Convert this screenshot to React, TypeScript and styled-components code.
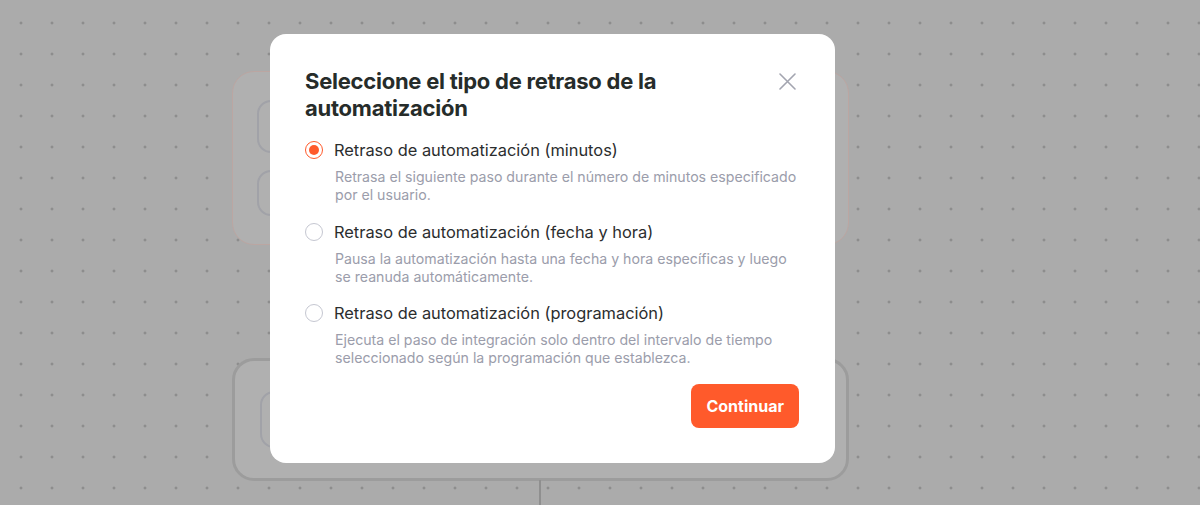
import React, { useState } from "react";
import styled, { createGlobalStyle } from "styled-components";

const Global = createGlobalStyle`
  html, body { margin: 0; padding: 0; }
  body { font-family: Inter, "Noto Sans", sans-serif; background: #ababab; }
  * { box-sizing: border-box; }
`;

const Canvas = styled.div`
  position: relative;
  width: 1200px;
  height: 505px;
  overflow: hidden;
  background-color: #ababab;
  background-image: radial-gradient(circle, #7a7a7a 0.9px, transparent 1.3px);
  background-size: 31px 31px;
  background-position: 5.5px 7.5px;
`;

const NodeCard = styled.div<{ $top: number; $height: number; $tone: "accent" | "plain" }>`
  position: absolute;
  left: 232px;
  top: ${(p) => p.$top}px;
  width: 617px;
  height: ${(p) => p.$height}px;
  border-radius: 22px;
  background: #b0b0b0;
  border: ${(p) => (p.$tone === "accent" ? "1.5px solid #bba6a2" : "3px solid #9c9c9c")};
  display: flex;
  flex-direction: column;
  gap: 17px;
  padding: ${(p) => (p.$tone === "accent" ? "28px 24px" : "30px 25px")};
`;

const NodeField = styled.div<{ $h: number }>`
  width: 200px;
  height: ${(p) => p.$h}px;
  border-radius: 14px;
  border: 2px solid #a1a2a8;
`;

const Connector = styled.div`
  position: absolute;
  left: 539px;
  top: 480px;
  width: 2px;
  height: 30px;
  background: #8f8f8f;
`;

const Modal = styled.div`
  position: absolute;
  left: 270px;
  top: 34px;
  width: 565px;
  height: 429px;
  background: #ffffff;
  border-radius: 16px;
  padding: 34px 35px 35px 35px;
  display: flex;
  flex-direction: column;
`;

const Header = styled.div`
  display: flex;
  align-items: flex-start;
  justify-content: space-between;
  gap: 40px;
`;

const Title = styled.h2`
  margin: 0;
  font-family: Inter, "Noto Sans", sans-serif;
  font-size: 22px;
  line-height: 27px;
  font-weight: 700;
  color: #262c2a;
  letter-spacing: -0.25px;
`;

const CloseButton = styled.button`
  border: none;
  background: transparent;
  padding: 0;
  margin-top: 4px;
  margin-right: 4px;
  width: 18px;
  height: 18px;
  cursor: pointer;
  display: flex;
  align-items: center;
  justify-content: center;
`;

const Options = styled.div`
  display: flex;
  flex-direction: column;
  gap: 16.5px;
  margin-top: 17px;
`;

const Option = styled.label`
  display: grid;
  grid-template-columns: 18px 1fr;
  column-gap: 11px;
  row-gap: 7px;
  cursor: pointer;
`;

const Radio = styled.span<{ $checked: boolean }>`
  width: 18px;
  height: 18px;
  border-radius: 50%;
  border: 1.5px solid ${(p) => (p.$checked ? "#ff5a2b" : "#c5c7d1")};
  display: flex;
  align-items: center;
  justify-content: center;
  align-self: center;
  &::after {
    content: "";
    width: 10px;
    height: 10px;
    border-radius: 50%;
    background: ${(p) => (p.$checked ? "#ff5a2b" : "transparent")};
  }
`;

const OptionLabel = styled.span`
  font-size: 16.4px;
  line-height: 22px;
  color: #2b2d2e;
  font-weight: 400;
`;

const OptionDesc = styled.span`
  grid-column: 2;
  font-size: 14.15px;
  line-height: 18px;
  color: #9b9dab;
  padding-left: 1px;
`;

const Footer = styled.div`
  margin-top: auto;
  display: flex;
  justify-content: flex-end;
  padding-right: 1px;
`;

const PrimaryButton = styled.button`
  height: 44px;
  padding: 0 15px;
  border: none;
  border-radius: 8px;
  background: #ff5a2b;
  color: #ffffff;
  font-family: Inter, "Noto Sans", sans-serif;
  font-size: 16px;
  font-weight: 700;
  cursor: pointer;
`;

const options = [
  {
    label: "Retraso de automatización (minutos)",
    desc: "Retrasa el siguiente paso durante el número de minutos especificado por el usuario.",
  },
  {
    label: "Retraso de automatización (fecha y hora)",
    desc: "Pausa la automatización hasta una fecha y hora específicas y luego se reanuda automáticamente.",
  },
  {
    label: "Retraso de automatización (programación)",
    desc: "Ejecuta el paso de integración solo dentro del intervalo de tiempo seleccionado según la programación que establezca.",
  },
];

export default function App() {
  const [selected, setSelected] = useState(0);
  return (
    <>
      <Global />
      <Canvas>
        <NodeCard $top={71} $height={174} $tone="accent">
          <NodeField $h={58} />
          <NodeField $h={50} />
        </NodeCard>
        <NodeCard $top={358} $height={123} $tone="plain">
          <NodeField $h={60} />
        </NodeCard>
        <Connector />
        <Modal>
          <Header>
            <Title>Seleccione el tipo de retraso de la automatización</Title>
            <CloseButton aria-label="Cerrar">
              <svg width="17" height="17" viewBox="0 0 17 17" fill="none">
                <path d="M1 1L16 16M16 1L1 16" stroke="#a3a5b0" strokeWidth="1.6" strokeLinecap="round" />
              </svg>
            </CloseButton>
          </Header>
          <Options>
            {options.map((o, i) => (
              <Option key={i} onClick={() => setSelected(i)}>
                <Radio $checked={selected === i} />
                <OptionLabel>{o.label}</OptionLabel>
                <OptionDesc>{o.desc}</OptionDesc>
              </Option>
            ))}
          </Options>
          <Footer>
            <PrimaryButton>Continuar</PrimaryButton>
          </Footer>
        </Modal>
      </Canvas>
    </>
  );
}
